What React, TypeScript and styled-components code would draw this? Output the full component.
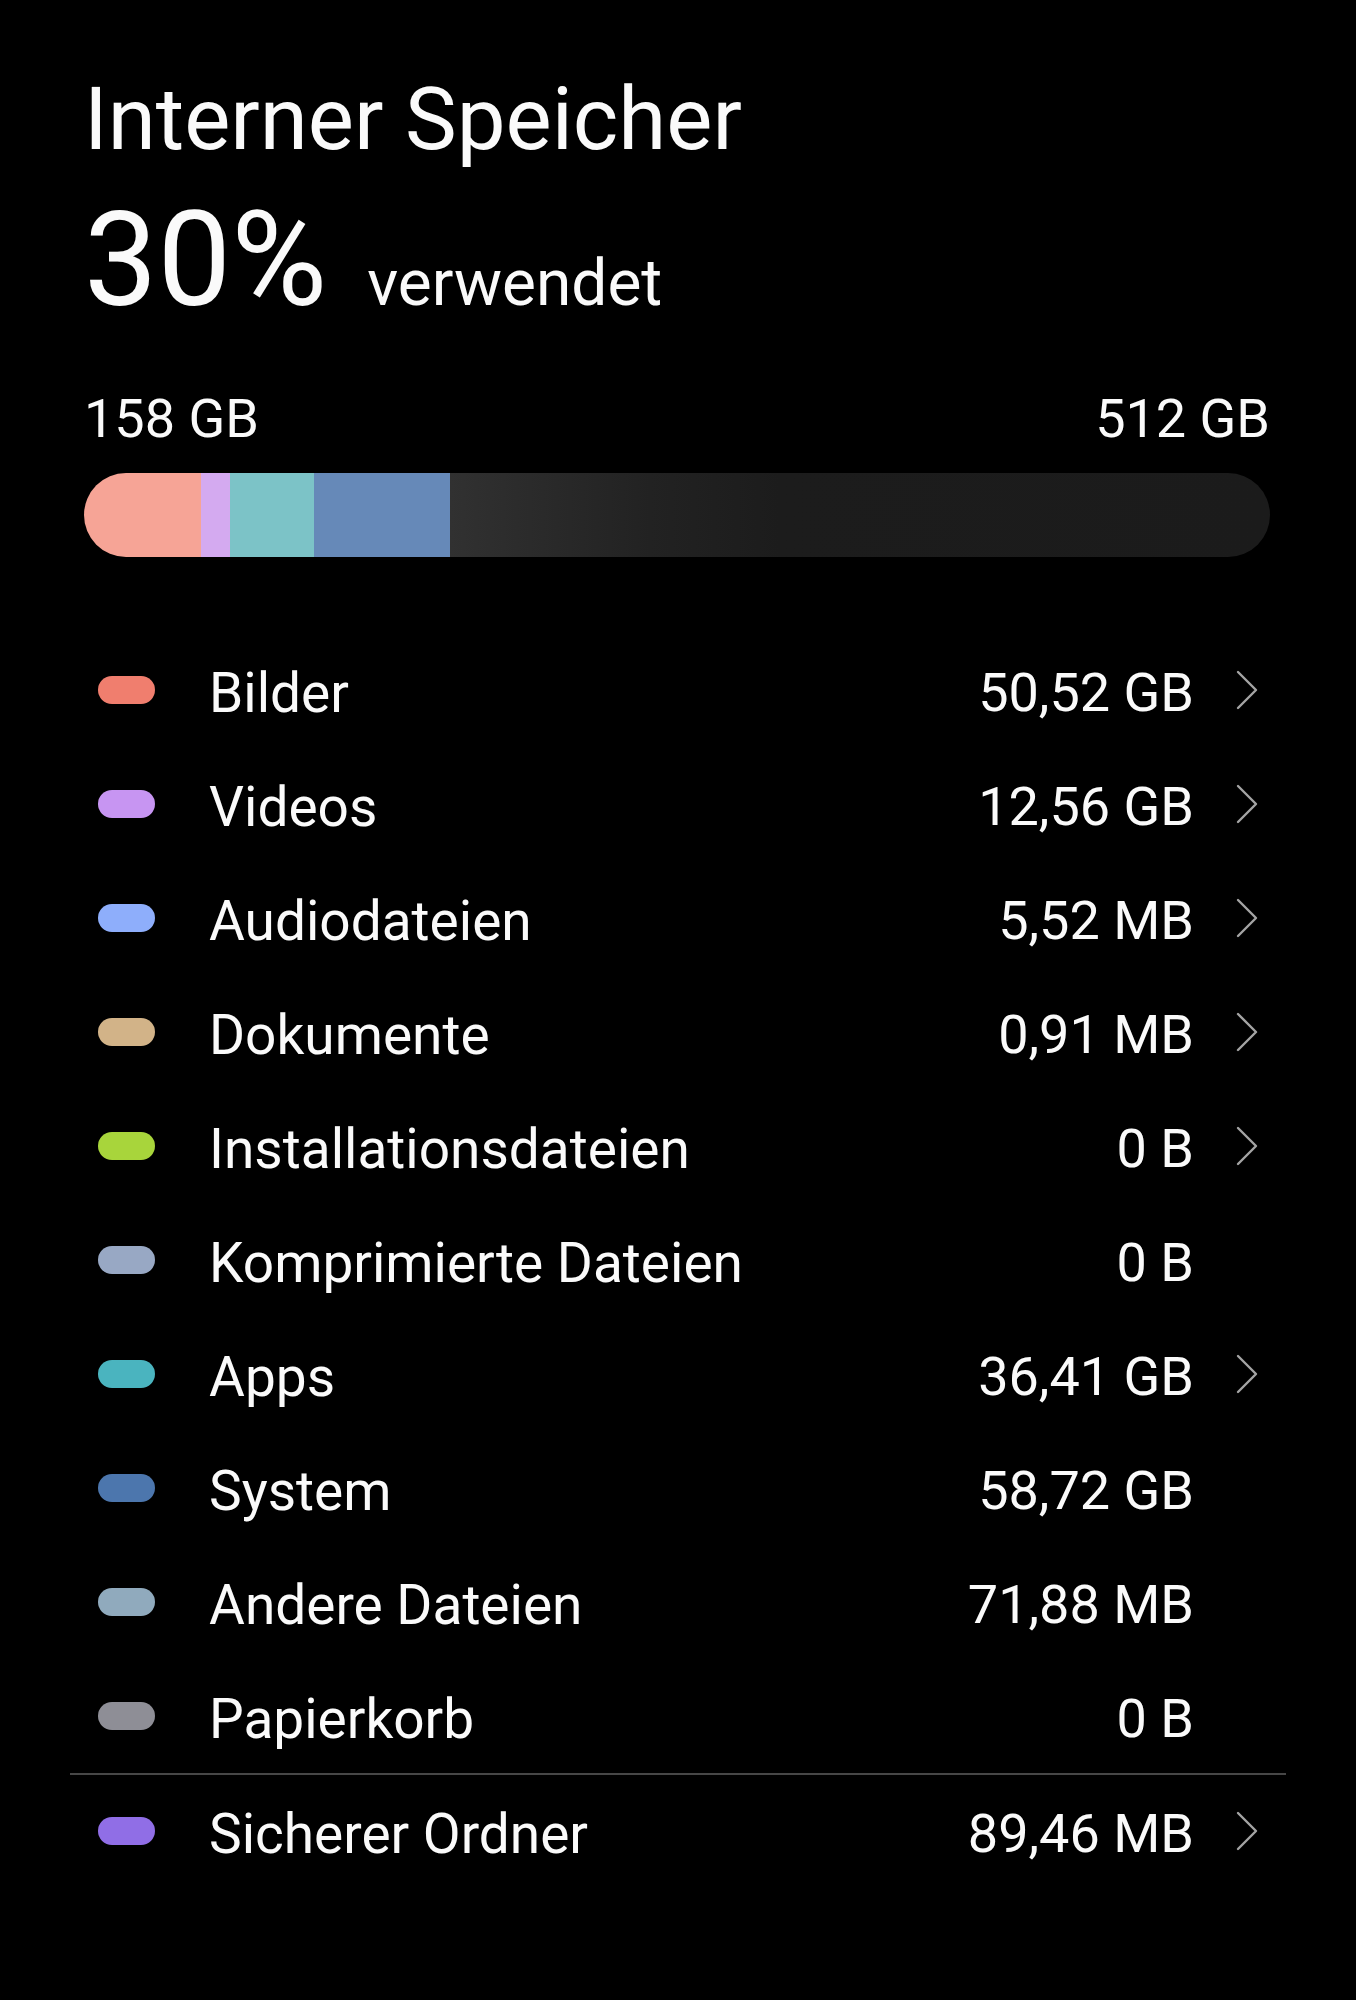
import React from "react";
import styled, { createGlobalStyle } from "styled-components";

const GlobalStyle = createGlobalStyle`
  html, body {
    margin: 0;
    padding: 0;
    background: #000;
  }
  body {
    font-family: Roboto, "Noto Sans", "Liberation Sans", sans-serif;
    color: #fafafa;
    -webkit-font-smoothing: antialiased;
  }
`;

const Page = styled.main`
  width: 1356px;
  min-height: 2000px;
  background: #000;
  padding-top: 67px;
  box-sizing: border-box;
`;

const Header = styled.section`
  padding: 0 86px 0 84px;
  display: flex;
  flex-direction: column;
`;

const Title = styled.h1`
  margin: 0;
  font-size: 87px;
  line-height: 104px;
  font-weight: 400;
  color: #fafafa;
`;

const UsageLine = styled.div`
  margin-top: 14px;
  display: flex;
  align-items: baseline;
  gap: 40px;
  line-height: 150px;
`;

const Percent = styled.span`
  font-size: 131px;
  font-weight: 400;
`;

const UsedLabel = styled.span`
  font-size: 64px;
  font-weight: 400;
`;

const SizeRow = styled.div`
  margin-top: 28px;
  display: flex;
  justify-content: space-between;
  font-size: 54px;
  line-height: 64px;
`;

const Bar = styled.div`
  margin-top: 22px;
  height: 84px;
  border-radius: 42px;
  overflow: hidden;
  display: flex;
`;

const Segment = styled.div<{ $color: string }>`
  height: 100%;
  background: ${(p) => p.$color};
  flex: none;
`;

const Rest = styled.div`
  flex: 1;
  height: 100%;
  background: linear-gradient(90deg, #313131 0px, #222 200px, #1c1c1c 330px, #1b1b1b 100%);
`;

const List = styled.ul`
  list-style: none;
  margin: 79px 70px 0 70px;
  padding: 0;
`;

const Row = styled.li`
  height: 114px;
  display: flex;
  align-items: center;
  padding: 0 28px;
`;

const Dot = styled.span<{ $color: string }>`
  width: 57px;
  height: 28px;
  border-radius: 14px;
  background: ${(p) => p.$color};
  flex: none;
  margin-bottom: 6px;
`;

const Label = styled.span`
  margin-left: 54px;
  flex: 1;
  font-size: 55px;
  line-height: 64px;
  color: #fafafa;
  white-space: nowrap;
`;

const Value = styled.span`
  font-size: 54px;
  line-height: 64px;
  color: #fafafa;
  white-space: nowrap;
`;

const ChevronSlot = styled.span`
  width: 64px;
  flex: none;
  display: flex;
  justify-content: flex-end;
  align-items: center;
  margin-bottom: 6px;
`;

const Divider = styled.li`
  height: 2px;
  background: #474747;
  margin: -3px 0 2px;
`;

const Chevron = () => (
  <svg width="22" height="40" viewBox="0 0 22 40" fill="none">
    <path d="M2 2 L20 20 L2 38" stroke="#a4a4a4" strokeWidth="2.4" strokeLinecap="round" strokeLinejoin="round" />
  </svg>
);

type Item = { label: string; value: string; color: string; chevron: boolean };

const items: Item[] = [
  { label: "Bilder", value: "50,52 GB", color: "#f07e6e", chevron: true },
  { label: "Videos", value: "12,56 GB", color: "#c795f2", chevron: true },
  { label: "Audiodateien", value: "5,52 MB", color: "#8eaefb", chevron: true },
  { label: "Dokumente", value: "0,91 MB", color: "#d2b388", chevron: true },
  { label: "Installationsdateien", value: "0 B", color: "#a8d53b", chevron: true },
  { label: "Komprimierte Dateien", value: "0 B", color: "#98a8c4", chevron: false },
  { label: "Apps", value: "36,41 GB", color: "#4ab4bf", chevron: true },
  { label: "System", value: "58,72 GB", color: "#4c76ad", chevron: false },
  { label: "Andere Dateien", value: "71,88 MB", color: "#90aabd", chevron: false },
  { label: "Papierkorb", value: "0 B", color: "#8e8e96", chevron: false },
];

const secure: Item = { label: "Sicherer Ordner", value: "89,46 MB", color: "#906ee6", chevron: true };

const TOTAL = 512;
const segments = [
  { gb: 50.52, color: "#f6a496" },
  { gb: 12.56, color: "#d4aaf0" },
  { gb: 36.41, color: "#7cc3c7" },
  { gb: 58.72, color: "#6689b8" },
];

const ItemRow = ({ item }: { item: Item }) => (
  <Row>
    <Dot $color={item.color} />
    <Label>{item.label}</Label>
    <Value>{item.value}</Value>
    <ChevronSlot>{item.chevron ? <Chevron /> : null}</ChevronSlot>
  </Row>
);

export default function App() {
  return (
    <>
      <GlobalStyle />
      <Page>
        <Header>
          <Title>Interner Speicher</Title>
          <UsageLine>
            <Percent>30%</Percent>
            <UsedLabel>verwendet</UsedLabel>
          </UsageLine>
          <SizeRow>
            <span>158 GB</span>
            <span>512 GB</span>
          </SizeRow>
          <Bar>
            {segments.map((s, i) => (
              <Segment key={i} $color={s.color} style={{ width: `${(s.gb / TOTAL) * 100}%` }} />
            ))}
            <Rest />
          </Bar>
        </Header>
        <List>
          {items.map((it) => (
            <ItemRow key={it.label} item={it} />
          ))}
          <Divider />
          <ItemRow item={secure} />
        </List>
      </Page>
    </>
  );
}
